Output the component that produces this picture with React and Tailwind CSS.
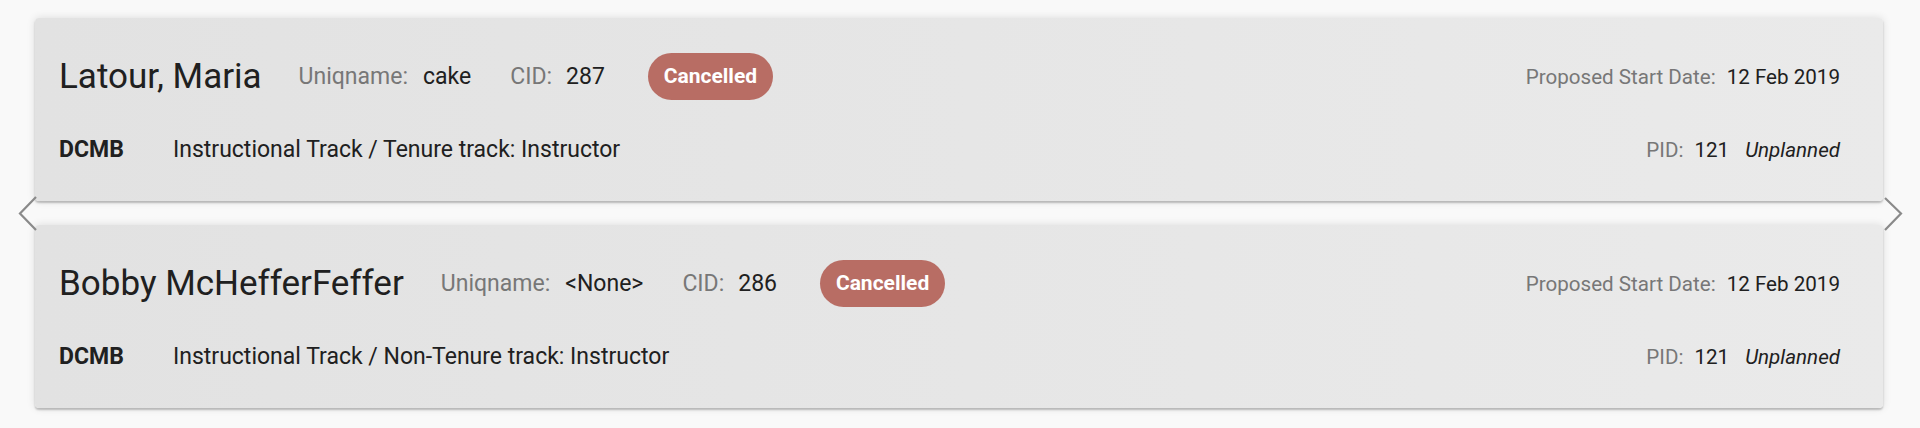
import React from "react";

const people = [
  {
    name: "Latour, Maria",
    uniq: "cake",
    cid: "287",
    track: "Instructional Track / Tenure track: Instructor",
  },
  {
    name: "Bobby McHefferFeffer",
    uniq: "<None>",
    cid: "286",
    track: "Instructional Track / Non-Tenure track: Instructor",
  },
];

function Card({ p }) {
  return (
    <div className="h-[183px] shrink-0 rounded-[4px] bg-linear-to-r from-[#e2e2e2] to-[#eaeaea] shadow-[0_2px_2px_rgba(0,0,0,0.22),0_0_9px_rgba(0,0,0,0.12)] pl-[24px] pr-[43px] pt-[35px] flex flex-col">
      <div className="flex items-center h-[47px]">
        <span className="text-[35px] leading-[47px] text-[#202020] whitespace-nowrap">{p.name}</span>
        <span className="ml-[37px] text-[23px] leading-[28px] text-[#777777]">Uniqname:</span>
        <span className="ml-[15px] text-[23px] leading-[28px] text-[#202020]">{p.uniq}</span>
        <span className="ml-[39px] text-[23px] leading-[28px] text-[#777777]">CID:</span>
        <span className="ml-[14px] text-[23px] leading-[28px] text-[#202020]">{p.cid}</span>
        <span className="ml-[43px] h-[47px] w-[125px] rounded-full bg-[#b86d64] text-white font-bold text-[21px] flex items-center justify-center">
          Cancelled
        </span>
        <div className="ml-auto flex items-center text-[20.6px] leading-[26px]">
          <span className="text-[#777777]">Proposed Start Date:</span>
          <span className="ml-[11px] text-[#202020]">12 Feb 2019</span>
        </div>
      </div>
      <div className="mt-[36px] flex items-center h-[28px]">
        <span className="w-[114px] font-bold text-[23px] leading-[28px] text-[#202020]">DCMB</span>
        <span className="text-[23px] leading-[28px] text-[#202020]">{p.track}</span>
        <div className="ml-auto flex items-center text-[20.6px] leading-[26px]">
          <span className="text-[#777777]">PID:</span>
          <span className="ml-[11px] text-[#202020]">121</span>
          <span className="ml-[16px] italic text-[#202020]">Unplanned</span>
        </div>
      </div>
    </div>
  );
}

export default function App() {
  return (
    <div className="relative w-full h-[428px] overflow-hidden bg-[#f9f9f9] font-['Roboto',sans-serif] pt-[18px] pl-[35px] pr-[37px] flex flex-col gap-[24px]">
      {people.map((p) => (
        <Card key={p.cid} p={p} />
      ))}
      <svg
        className="absolute left-[18px] top-[195px] z-10"
        width="20"
        height="37"
        viewBox="0 0 20 37"
        fill="none"
      >
        <path d="M18 2 L2 18.5 L18 35" stroke="#8a8a8a" strokeWidth="2.2" />
      </svg>
      <svg
        className="absolute right-[17px] top-[196px] z-10"
        width="20"
        height="37"
        viewBox="0 0 20 37"
        fill="none"
      >
        <path d="M2 2 L18 17.5 L2 34" stroke="#8a8a8a" strokeWidth="2.2" />
      </svg>
    </div>
  );
}
